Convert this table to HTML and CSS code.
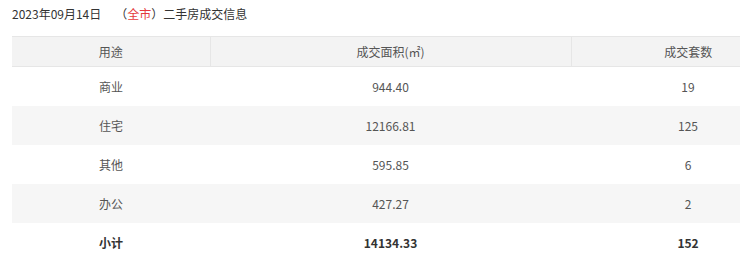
FILE: index.html
```html
<!DOCTYPE html>
<html lang="zh">
<head>
<meta charset="utf-8">
<link rel="stylesheet" href="styles.css">
</head>
<body>
<div class="page">
  <div class="title">2023年09月14日<span class="region">（<span class="red">全市</span>）</span>二手房成交信息</div>
  <table class="deals">
    <colgroup>
      <col class="c1"><col class="c2"><col class="c3">
    </colgroup>
    <thead>
      <tr><th>用途</th><th>成交面积(㎡)</th><th>成交套数</th></tr>
    </thead>
    <tbody>
      <tr><td>商业</td><td>944.40</td><td>19</td></tr>
      <tr class="alt"><td>住宅</td><td>12166.81</td><td>125</td></tr>
      <tr><td>其他</td><td>595.85</td><td>6</td></tr>
      <tr class="alt"><td>办公</td><td>427.27</td><td>2</td></tr>
      <tr class="total"><td>小计</td><td>14134.33</td><td>152</td></tr>
    </tbody>
  </table>
</div>
</body>
</html>
```

FILE: styles.css
```css
html, body {
  margin: 0;
  padding: 0;
  overflow: hidden;
  background: #fff;
}
.page {
  padding: 4px 12px 0 12px;
  font-family: "Noto Sans CJK SC", "Noto Sans", sans-serif;
  font-size: 12px;
  color: #555;
}
.title {
  font-size: 12px;
  line-height: 20px;
  color: #333;
  margin-bottom: 12px;
  white-space: nowrap;
}
.region {
  margin-left: 14px;
}
.red {
  color: #e4393c;
}
.deals {
  border-collapse: collapse;
  table-layout: fixed;
  width: 793px;
}
.c1 { width: 198px; }
.c2 { width: 361px; }
.c3 { width: 234px; }
.deals th {
  background: #f3f3f3;
  border-top: 1px solid #e6e6e6;
  border-bottom: 1px solid #e6e6e6;
  border-left: 1px solid #e6e6e6;
  height: 29px;
  padding: 0;
  font-weight: normal;
  text-align: center;
  color: #555;
}
.deals th:first-child {
  border-left: none;
}
.deals td {
  height: 39px;
  padding: 0;
  text-align: center;
}
.deals tr.alt td {
  background: #f6f6f6;
}
.deals tr.total td {
  font-weight: bold;
  color: #333;
}
```
